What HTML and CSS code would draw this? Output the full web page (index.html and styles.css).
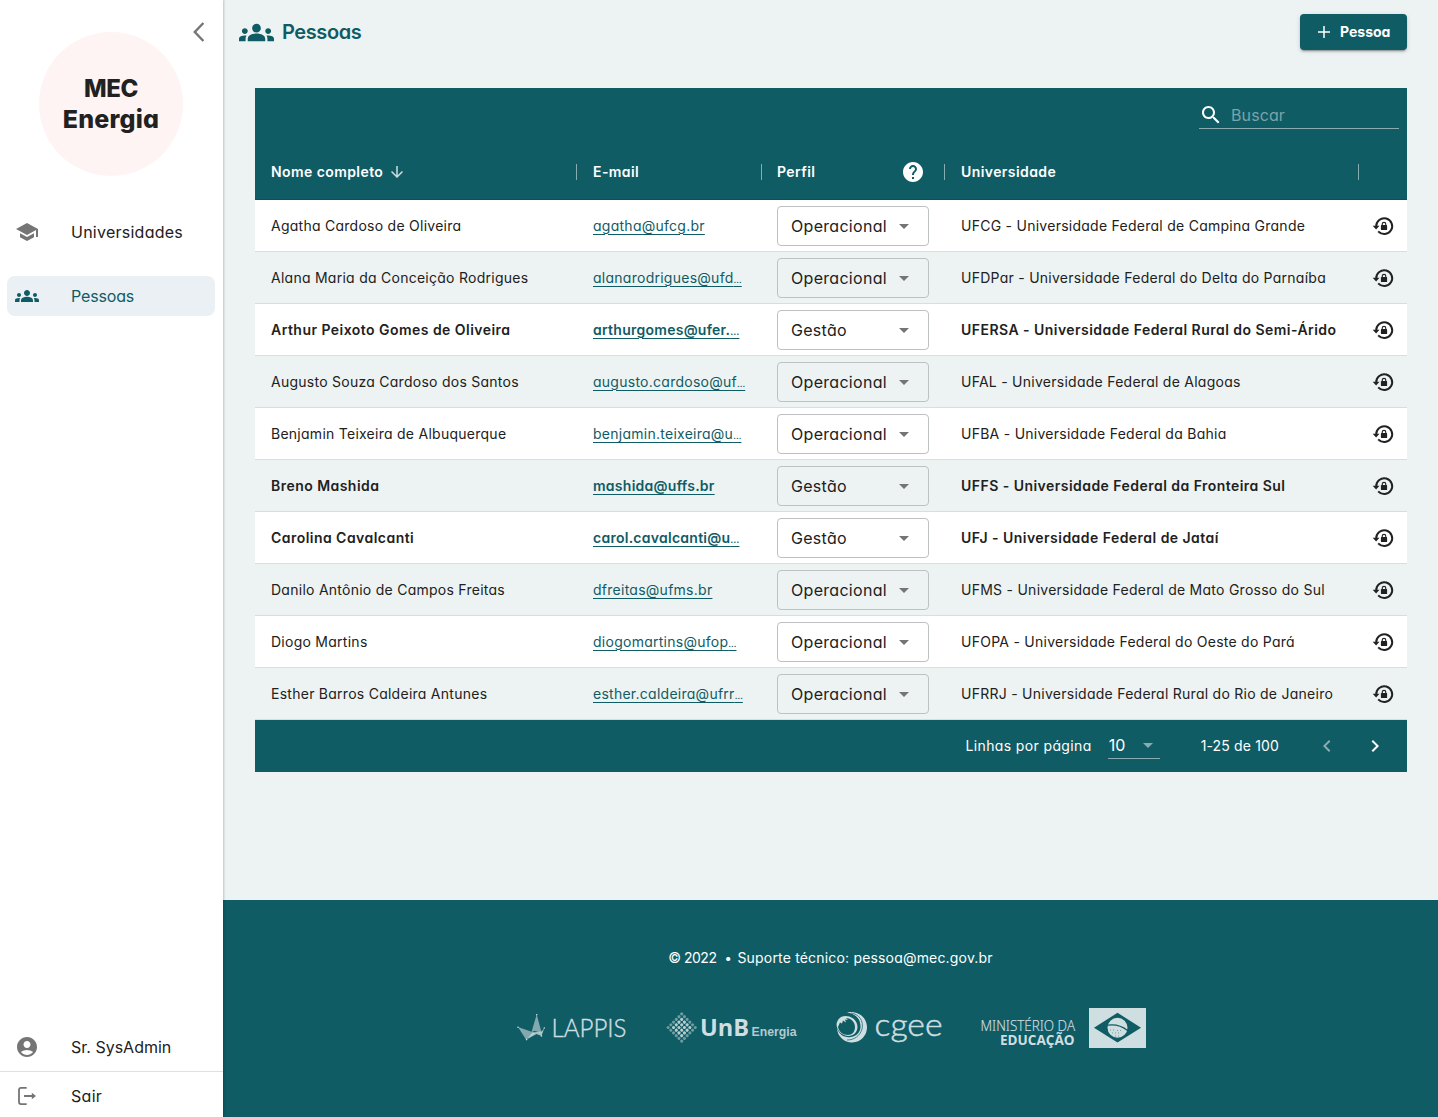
FILE: index.html
```html
<!DOCTYPE html>
<html lang="pt-BR">
<head>
<meta charset="utf-8">
<title>MEC Energia - Pessoas</title>
<link rel="stylesheet" href="styles.css">
</head>
<body>
<svg class="sprite" aria-hidden="true">
  <symbol id="groups" viewBox="0 0 24 24"><path d="M12 12.75c1.63 0 3.07.39 4.24.9 1.08.48 1.76 1.56 1.76 2.73V18H6v-1.61c0-1.18.68-2.26 1.76-2.73 1.17-.52 2.61-.91 4.24-.91zM4 13c1.1 0 2-.9 2-2s-.9-2-2-2-2 .9-2 2 .9 2 2 2zm1.13 1.1c-.37-.06-.74-.1-1.13-.1-.99 0-1.93.21-2.78.58C.48 14.9 0 15.62 0 16.43V18h4.5v-1.61c0-.83.23-1.61.63-2.29zM20 13c1.1 0 2-.9 2-2s-.9-2-2-2-2 .9-2 2 .9 2 2 2zm4 3.43c0-.81-.48-1.53-1.22-1.85-.85-.37-1.79-.58-2.78-.58-.39 0-.76.04-1.13.1.4.68.63 1.46.63 2.29V18H24v-1.57zM12 6c1.66 0 3 1.34 3 3s-1.34 3-3 3-3-1.34-3-3 1.34-3 3-3z"/></symbol>
  <symbol id="drop" viewBox="0 0 24 24"><path d="m7 10 5 5 5-5z"/></symbol>
  <symbol id="reset" viewBox="0 0 24 24"><path d="M5.200 12.400A8 7.900 0 1 1 7.200 17.400" fill="none" stroke="currentColor" stroke-width="2"/><path d="M1.700 11.700h6.800L5.100 15.600zM10.500 11h.2v-.9a2.300 2.300 0 0 1 4.600 0v.9h.2q.6 0 .6.6v3.800q0 .6-.6.6h-5q-.6 0-.6-.6v-3.800q0-.6.6-.6zm1.300 0h2.400v-.9a1.200 1.200 0 0 0-2.400 0z"/></symbol>
</svg>
<div class="app">
  <aside class="sidebar">
    <div class="brand">
      <div class="brand-disc"><span class="brand-mec">MEC</span><span class="brand-energy">Energia</span></div>
      <svg class="collapse" width="14" height="22" viewBox="0 0 14 22"><path d="M11.4 2 2.8 11l8.6 9"/></svg>
    </div>
    <nav class="menu">
      <a class="menu-item"><svg class="icon" viewBox="0 0 24 24"><path d="M5 13.18v4L12 21l7-3.82v-4L12 17l-7-3.82zM12 3 1 9l11 6 9-4.91V17h2V9L12 3z"/></svg><span class="t-univ">Universidades</span></a>
      <a class="menu-item active"><svg class="icon"><use href="#groups"/></svg><span class="t-people">Pessoas</span></a>
    </nav>
    <div class="account">
      <a class="account-item"><svg class="icon" viewBox="0 0 24 24"><path d="M12 2C6.48 2 2 6.48 2 12s4.48 10 10 10 10-4.48 10-10S17.52 2 12 2zm0 4c1.93 0 3.5 1.57 3.5 3.5S13.93 13 12 13s-3.5-1.57-3.5-3.5S10.07 6 12 6zm0 14c-2.03 0-4.43-.82-6.14-2.88C7.55 15.8 9.68 15 12 15s4.45.8 6.14 2.12C16.43 19.18 14.03 20 12 20z"/></svg><span>Sr. SysAdmin</span></a>
      <a class="account-item exit"><svg class="icon" viewBox="0 0 24 24"><path d="M11.7 3.9H6q-2 0-2 2v12.2q0 2 2 2h5.7M9 12h9" fill="none" stroke="currentColor" stroke-width="1.8"/><path d="m16.8 8.8 4.2 3.2-4.2 3.2z"/></svg><span>Sair</span></a>
    </div>
  </aside>
  <div class="page">
    <header class="topbar">
      <h1 class="title"><svg class="title-icon"><use href="#groups"/></svg><span>Pessoas</span></h1>
      <button class="add"><svg viewBox="0 0 24 24"><path d="M20 13h-7v7h-2v-7H4v-2h7V4h2v7h7z"/></svg><span>Pessoa</span></button>
    </header>
    <main class="content">
      <div class="toolbar">
        <label class="search"><svg class="icon" viewBox="0 0 24 24"><path d="M15.5 14h-.79l-.28-.27C15.41 12.59 16 11.11 16 9.5 16 5.91 13.09 3 9.5 3S3 5.91 3 9.5 5.91 16 9.5 16c1.61 0 3.09-.59 4.23-1.57l.27.28v.79l5 4.99L20.49 19l-4.99-5zm-6 0C7.01 14 5 11.99 5 9.5S7.01 5 9.5 5 14 7.01 14 9.5 11.99 14 9.5 14z"/></svg><span>Buscar</span></label>
      </div>
      <table class="people">
        <colgroup><col class="c-name"><col class="c-mail"><col class="c-role"><col class="c-univ"><col class="c-act"></colgroup>
        <thead><tr>
          <th><div class="head"><span>Nome completo</span><svg class="sort" viewBox="0 0 24 24"><path d="m20 12-1.41-1.41L13 16.17V4h-2v12.17l-5.58-5.59L4 12l8 8 8-8z"/></svg></div></th>
          <th><div class="head head-mail"><span>E-mail</span></div></th>
          <th><div class="head head-role"><span>Perfil</span><svg class="icon help" viewBox="0 0 24 24"><path d="M12 2C6.48 2 2 6.48 2 12s4.48 10 10 10 10-4.48 10-10S17.52 2 12 2zm1 17h-2v-2h2v2zm2.07-7.75-.9.92C13.45 12.9 13 13.5 13 15h-2v-.5c0-1.1.45-2.1 1.17-2.83l1.24-1.26c.37-.36.59-.86.59-1.41 0-1.1-.9-2-2-2s-2 .9-2 2H8c0-2.21 1.79-4 4-4s4 1.79 4 4c0 .88-.36 1.68-.93 2.25z"/></svg></div></th>
          <th><div class="head"><span>Universidade</span></div></th>
          <th></th>
        </tr></thead>
        <tbody>
          <tr><td>Agatha Cardoso de Oliveira</td><td><a>agatha@ufcg.br</a></td><td><div class="select"><span>Operacional</span><svg class="icon"><use href="#drop"/></svg></div></td><td>UFCG - Universidade Federal de Campina Grande</td><td><svg class="icon"><use href="#reset"/></svg></td></tr>
          <tr><td>Alana Maria da Conceição Rodrigues</td><td><a>alanarodrigues@ufd<i>…</i></a></td><td><div class="select"><span>Operacional</span><svg class="icon"><use href="#drop"/></svg></div></td><td>UFDPar - Universidade Federal do Delta do Parnaíba</td><td><svg class="icon"><use href="#reset"/></svg></td></tr>
          <tr class="manager"><td>Arthur Peixoto Gomes de Oliveira</td><td><a>arthurgomes@ufer.<i>…</i></a></td><td><div class="select"><span>Gestão</span><svg class="icon"><use href="#drop"/></svg></div></td><td>UFERSA - Universidade Federal Rural do Semi-Árido</td><td><svg class="icon"><use href="#reset"/></svg></td></tr>
          <tr><td>Augusto Souza Cardoso dos Santos</td><td><a>augusto.cardoso@uf<i>…</i></a></td><td><div class="select"><span>Operacional</span><svg class="icon"><use href="#drop"/></svg></div></td><td>UFAL - Universidade Federal de Alagoas</td><td><svg class="icon"><use href="#reset"/></svg></td></tr>
          <tr><td>Benjamin Teixeira de Albuquerque</td><td><a>benjamin.teixeira@u<i>…</i></a></td><td><div class="select"><span>Operacional</span><svg class="icon"><use href="#drop"/></svg></div></td><td>UFBA - Universidade Federal da Bahia</td><td><svg class="icon"><use href="#reset"/></svg></td></tr>
          <tr class="manager"><td>Breno Mashida</td><td><a>mashida@uffs.br</a></td><td><div class="select"><span>Gestão</span><svg class="icon"><use href="#drop"/></svg></div></td><td>UFFS - Universidade Federal da Fronteira Sul</td><td><svg class="icon"><use href="#reset"/></svg></td></tr>
          <tr class="manager"><td>Carolina Cavalcanti</td><td><a>carol.cavalcanti@u<i>…</i></a></td><td><div class="select"><span>Gestão</span><svg class="icon"><use href="#drop"/></svg></div></td><td>UFJ - Universidade Federal de Jataí</td><td><svg class="icon"><use href="#reset"/></svg></td></tr>
          <tr><td>Danilo Antônio de Campos Freitas</td><td><a>dfreitas@ufms.br</a></td><td><div class="select"><span>Operacional</span><svg class="icon"><use href="#drop"/></svg></div></td><td>UFMS - Universidade Federal de Mato Grosso do Sul</td><td><svg class="icon"><use href="#reset"/></svg></td></tr>
          <tr><td>Diogo Martins</td><td><a>diogomartins@ufop<i>…</i></a></td><td><div class="select"><span>Operacional</span><svg class="icon"><use href="#drop"/></svg></div></td><td>UFOPA - Universidade Federal do Oeste do Pará</td><td><svg class="icon"><use href="#reset"/></svg></td></tr>
          <tr><td>Esther Barros Caldeira Antunes</td><td><a>esther.caldeira@ufrr<i>…</i></a></td><td><div class="select"><span>Operacional</span><svg class="icon"><use href="#drop"/></svg></div></td><td>UFRRJ - Universidade Federal Rural do Rio de Janeiro</td><td><svg class="icon"><use href="#reset"/></svg></td></tr>
        </tbody>
      </table>
      <div class="pager">
        <span class="per-label">Linhas por página</span>
        <div class="per-page"><span>10</span><svg class="icon"><use href="#drop"/></svg></div>
        <span class="range">1-25 de 100</span>
        <svg class="icon prev" viewBox="0 0 24 24"><path d="M15.41 7.41 14 6l-6 6 6 6 1.41-1.41L10.83 12z"/></svg>
        <svg class="icon" viewBox="0 0 24 24"><path d="M10 6 8.59 7.41 13.17 12l-4.58 4.59L10 18l6-6z"/></svg>
      </div>
    </main>
    <footer class="footer">
      <p class="support"><span class="year">© 2022</span><span class="bullet">•</span><span>Suporte técnico: pessoa@mec.gov.br</span></p>
      <div class="logos">
        <svg class="lappis" width="112" height="42" viewBox="517 1007 112 42">
          <path d="m518 1027 17 6-9 6.500zM531.500 1032l5.200-17.500 5 18.500-7-2z" opacity=".6"/>
          <path d="m526.600 1039.600 6-7 9-1 2.700-3.600-2.800 8-5-2z" opacity=".8"/>
          <circle cx="518" cy="1027.300" r=".8"/><circle cx="536.700" cy="1014.800" r=".8"/><circle cx="544.300" cy="1028" r=".8"/><circle cx="526.600" cy="1039.600" r=".8"/><circle cx="541.500" cy="1036" r=".8"/>
          <text x="551.500" y="1036.700" font-family="Lato, sans-serif" font-weight="300" font-size="26" stroke="#cfdee0" stroke-width=".4" textLength="75" lengthAdjust="spacingAndGlyphs">LAPPIS</text>
        </svg>
        <svg class="unb" width="130" height="42" viewBox="667 1007 130 42">
          <g transform="translate(681.700 1027.500) rotate(45)" fill="none" stroke="#cfdee0" stroke-width="3" stroke-linecap="round" stroke-dasharray="0 3.840">
            <path opacity=".5" d="M-9.600-9.600H9.700M-9.600-5.760H9.700M-9.600-1.920H9.700M-9.600 1.920H9.700M-9.600 5.760H9.700M-9.600 9.600H9.700"/>
            <path opacity=".75" d="M-5.760-5.760H5.900M-5.760-1.920H5.900M-5.760 1.920H5.900M-5.760 5.760H5.900"/>
          </g>
          <text x="700" y="1036.300" font-family="'Open Sans', sans-serif" font-weight="700" font-size="24" textLength="49" lengthAdjust="spacingAndGlyphs">UnB</text>
          <text x="751.500" y="1036.300" font-family="'Liberation Sans', sans-serif" font-weight="700" font-size="12.500" textLength="45" lengthAdjust="spacingAndGlyphs" opacity=".85">Energia</text>
        </svg>
        <svg class="cgee" width="110" height="42" viewBox="836 1007 110 42">
          <path fill-rule="evenodd" d="M847 1012.300c12-2 20 6 20 14.700a15 15 0 0 1-30 1c2 7 8 10 14 9 7-1 11-7 9-14-1-6-6-9-13-10.700z"/>
          <path d="M847 1014c9 0 14 7 12 14-2 8-11 10-17 6M851 1013c8 1 13 8 11 16-2 7-8 11-15 11" fill="none" stroke="#0f5c65" stroke-width=".7"/>
          <path d="M836.500 1024c1-5 4-8 9-8 7 0 12 5 12 11 0 5-4 9-9 9-6 0-12-5-12-12zm1.500 3c1 5 5 8 10 8 4 0 7-3 7-8s-4-9-9-9l2 2-3-.5 1 3-3-2-1 3-2-1z" fill-rule="evenodd"/>
          <text x="874.500" y="1035.700" font-family="Lato, sans-serif" font-weight="300" font-size="32" stroke="#cfdee0" stroke-width=".5" textLength="68" lengthAdjust="spacingAndGlyphs">cgee</text>
        </svg>
        <svg class="mec" width="166" height="42" viewBox="980 1007 166 42">
          <text x="980.500" y="1030.700" font-family="'Open Sans', sans-serif" font-weight="300" font-size="14" stroke="#cfdee0" stroke-width=".2" textLength="94.500" lengthAdjust="spacingAndGlyphs">MINISTÉRIO DA</text>
          <text x="1000" y="1044.800" font-family="'Open Sans', sans-serif" font-weight="700" font-size="13.500" textLength="74.500" lengthAdjust="spacingAndGlyphs">EDUCAÇÃO</text>
          <path d="M1089 1008h57v40h-57z"/>
          <path d="m1094 1027.700 23.500-14.900 23.500 14.900-23.500 14.900z" fill="#0f5c65"/>
          <circle cx="1117.500" cy="1027.800" r="10"/>
          <path d="M1107.600 1025.200q11-1.800 19.600 5" fill="none" stroke="#0f5c65" stroke-width="1.300"/>
          <path d="M1110 1030h6M1112 1033h8M1117 1030.500h6M1115 1036h6" stroke="#0f5c65" stroke-width=".7" stroke-dasharray=".7 2.300" fill="none"/>
        </svg>
      </div>
    </footer>
  </div>
</div>
</body>
</html>
```
FILE: styles.css
```css
* { box-sizing: border-box; }
body {
  margin: 0;
  font-family: Inter, "Open Sans", sans-serif;
  font-feature-settings: "cv11", "ss03";
  font-size: 16px;
  line-height: 24px;
  color: #212121;
  background: #edf3f3;
}
.sprite { position: absolute; width: 0; height: 0; }
svg { display: block; fill: currentColor; flex: none; overflow: visible; }
.icon { width: 24px; height: 24px; }
.app { display: flex; height: 1117px; }

.sidebar {
  width: 223px;
  flex: none;
  display: flex;
  flex-direction: column;
  background: #fff;
  box-shadow: 1px 0 2px rgba(0, 0, 0, .2);
  z-index: 1;
}
.brand { position: relative; padding: 32px 0 36px 39px; }
.brand-disc {
  width: 144px;
  height: 144px;
  border-radius: 50%;
  background: #fff4f4;
  display: flex;
  flex-direction: column;
  align-items: center;
  justify-content: center;
  text-align: center;
  font-size: 25px;
  font-weight: 800;
  line-height: 30px;
}
.brand-mec { font-size: 24px; letter-spacing: -.4px; }
.brand-energy { letter-spacing: .2px; }
.collapse { position: absolute; left: 192px; top: 21px; fill: none; stroke: #757575; stroke-width: 2.4; }
.menu { display: flex; flex-direction: column; gap: 24px; padding: 0 8px 0 7px; flex: 1; }
.menu-item { display: flex; align-items: center; gap: 32px; height: 40px; padding-left: 8px; border-radius: 8px; }
.menu-item .icon, .account-item .icon { color: #757575; }
.active { background: #eaf0f3; color: #0f5c65; }
.menu-item.active .icon { color: #0f5c65; }
.t-univ { letter-spacing: .25px; }
.t-people { letter-spacing: -.15px; }
.account-item { display: flex; align-items: center; gap: 32px; height: 49px; padding-left: 15px; border-bottom: 1px solid #e0e0e0; }
.account-item.exit { height: 45px; padding-top: 3px; border: 0; letter-spacing: .3px; }

.page { flex: 1; display: flex; flex-direction: column; }
.topbar { height: 64px; display: flex; align-items: center; justify-content: space-between; padding: 0 31px 0 16px; }
.title { display: flex; align-items: center; gap: 8px; margin: 0; font-size: 20px; font-weight: 600; letter-spacing: -.4px; color: #0f5c65; }
.title-icon { width: 35px; height: 35px; }
.add {
  display: flex;
  align-items: center;
  gap: 7px;
  width: 107px;
  height: 36px;
  padding: 0 0 0 15px;
  border: 0;
  border-radius: 4px;
  background: #0f5c65;
  color: #fff;
  font: 700 14px/24px Inter, sans-serif;
  font-feature-settings: inherit;
  box-shadow: 0 3px 1px -2px rgba(0, 0, 0, .2), 0 2px 2px rgba(0, 0, 0, .14), 0 1px 5px rgba(0, 0, 0, .12);
}
.add svg { width: 18px; height: 18px; }

.content { flex: 1; padding: 24px 31px 0 32px; font-size: 14px; }
.toolbar { height: 56px; padding: 14px 8px; background: #0f5c65; display: flex; justify-content: flex-end; }
.search {
  width: 200px;
  height: 27px;
  display: flex;
  align-items: center;
  gap: 8px;
  color: #fff;
  border-bottom: 1px solid #87adb2;
  font-size: 16px;
}
.search span { color: #7ba3a9; letter-spacing: .1px; }
.people { width: 1152px; table-layout: fixed; border-collapse: separate; border-spacing: 0; }
.c-name { width: 322px; }
.c-mail { width: 184px; }
.c-role { width: 184px; }
.c-univ { width: 414px; }
.c-act { width: 48px; }
th { height: 56px; padding: 0; background: #0f5c65; color: #fff; border-bottom: 1px solid #0c5059; font-weight: 600; text-align: left; }
.head { display: flex; align-items: center; height: 24px; padding-left: 16px; letter-spacing: .42px; }
.head::after { content: ""; width: 1px; height: 16px; margin-left: auto; background: #87adb2; }
.head-mail { margin-right: -1px; }
.head-role::after { margin-left: 19px; }
.sort { width: 18px; height: 18px; margin-left: 5px; color: #cfdee0; }
.help { margin-left: auto; }
td { height: 52px; padding: 0 0 0 16px; border-bottom: 1px solid #d8dddf; background: #fff; white-space: nowrap; letter-spacing: .26px; }
tbody tr:nth-child(even) td { background: #edf3f3; }
td a { color: #0f5c65; text-decoration: underline; text-underline-offset: 3px; text-decoration-thickness: 1px; }
td i { font-style: normal; font-size: 9.5px; line-height: 0; letter-spacing: 0; }
td:last-child { padding-left: 12px; }
.manager td { font-weight: 600; letter-spacing: .46px; }
.manager a { letter-spacing: .26px; }
.select {
  display: flex;
  align-items: center;
  justify-content: space-between;
  width: 152px;
  height: 40px;
  padding: 0 12px 0 13px;
  border: 1px solid #bdc1c2;
  border-radius: 4px;
  font-size: 16px;
  font-weight: 400;
  letter-spacing: .3px;
}
.select .icon { color: #757575; }
.pager { display: flex; align-items: center; justify-content: flex-end; height: 52px; padding-right: 20px; background: #0f5c65; color: #fff; }
.per-label { letter-spacing: .37px; }
.range { letter-spacing: .15px; }
.per-page { display: flex; justify-content: space-between; width: 52px; height: 26px; margin: 0 41px 0 16px; padding-left: 1px; border-bottom: 1px solid #87adb2; font-size: 16px; }
.per-page .icon { color: #87adb2; }
.prev { margin: 0 24px 0 36px; color: #87adb2; }

.footer { height: 217px; padding-top: 46px; background: #0f5c65; color: #fff; font-size: 14px; }
.support { display: flex; justify-content: center; gap: 8px; margin: 0 0 37px; letter-spacing: .18px; }
.year { letter-spacing: -.5px; }
.bullet { width: 5px; font-size: 13px; }
.logos { display: flex; height: 42px; padding-left: 294px; color: #cfdee0; }
.unb { margin-left: 38px; }
.cgee { margin-left: 39px; }
.mec { margin-left: 34px; }
```
